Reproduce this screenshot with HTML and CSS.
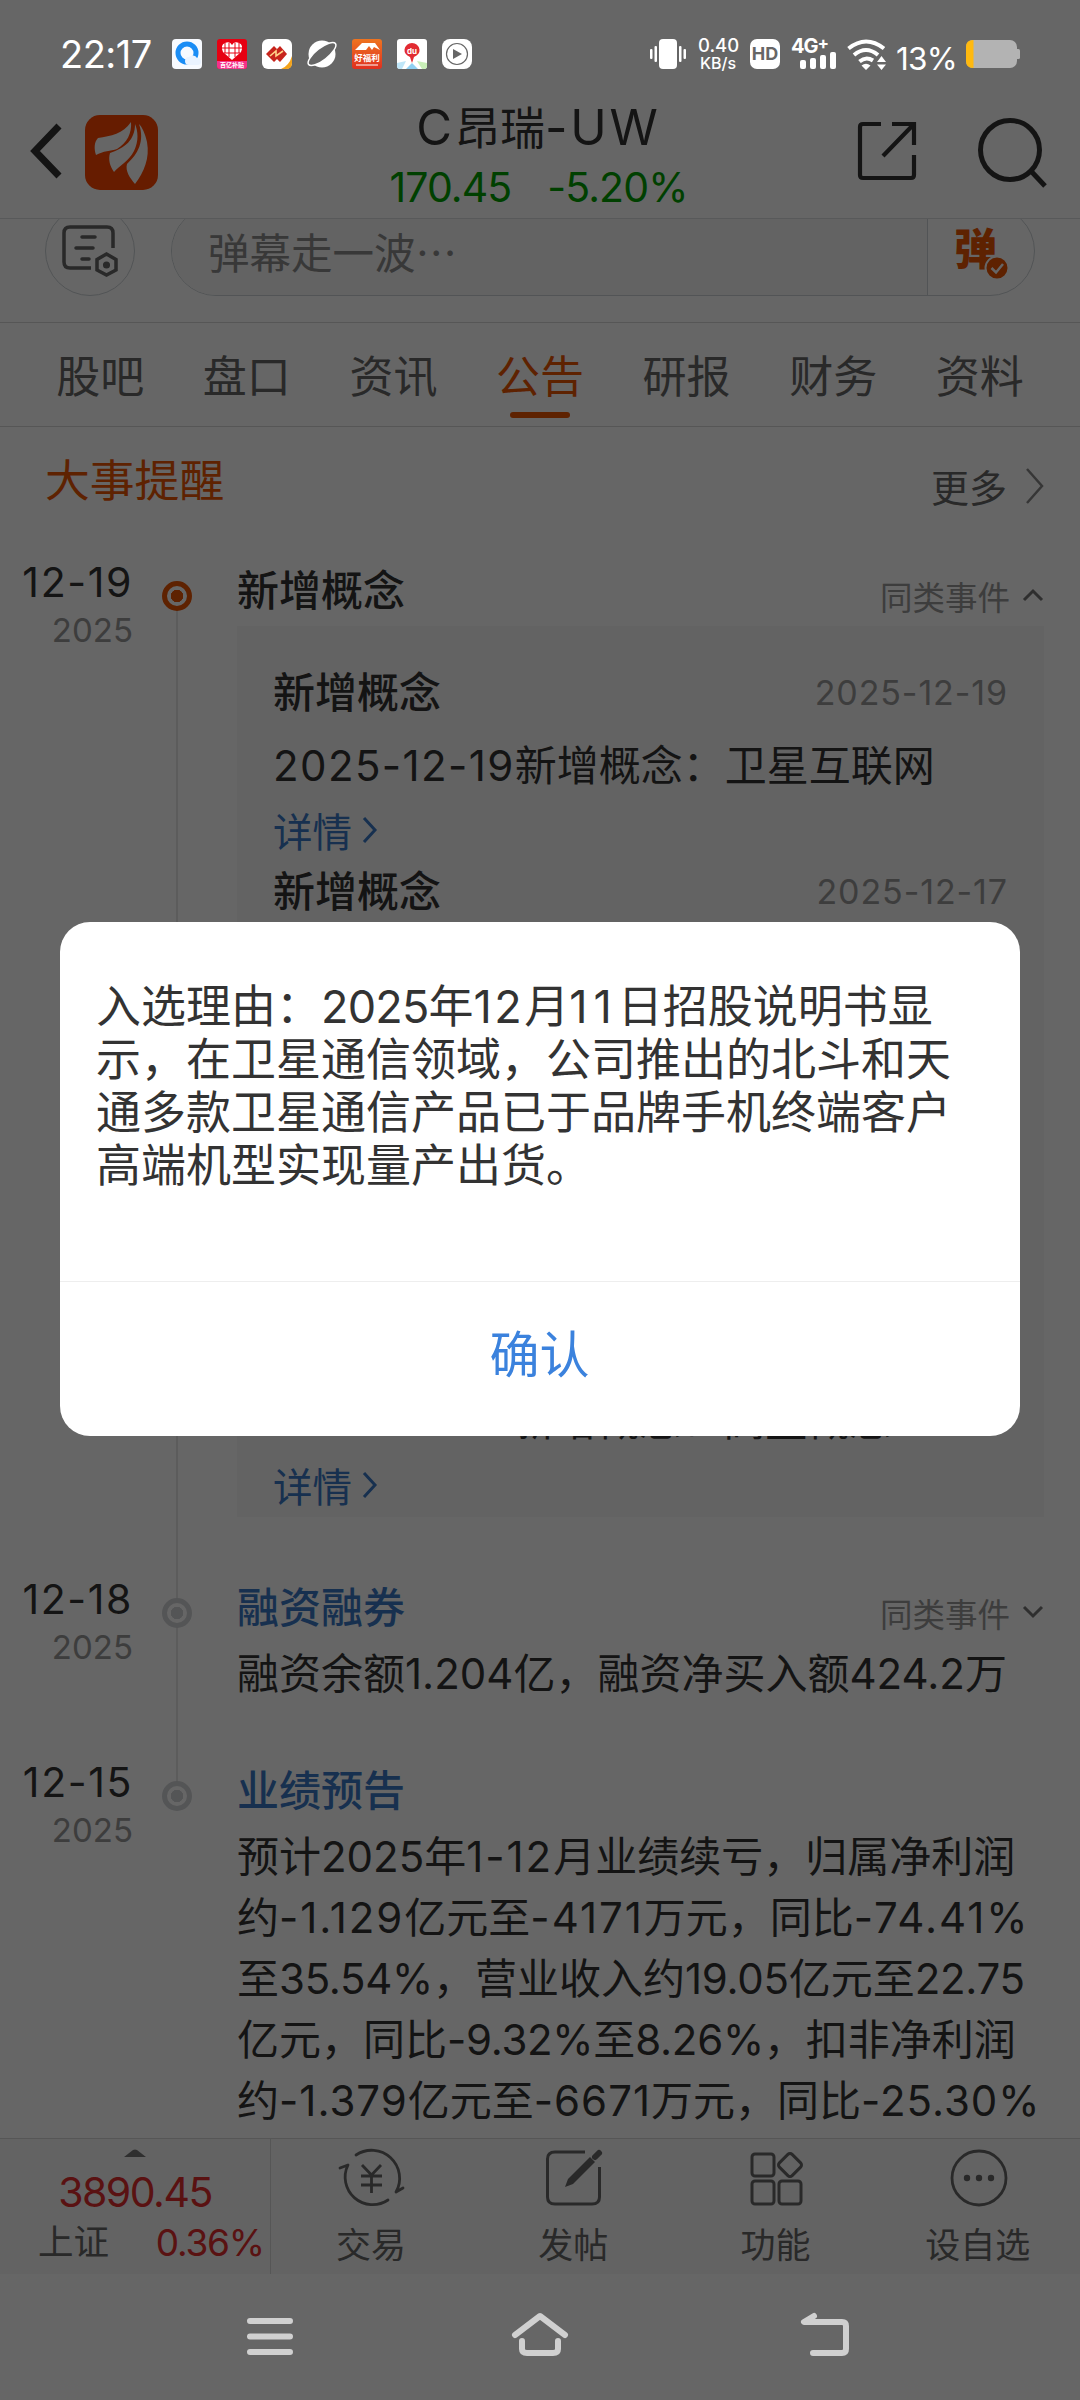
FILE: index.html
```html
<!DOCTYPE html>
<html lang="zh-CN">
<head>
    <meta charset="UTF-8">
    <meta name="viewport" content="width=device-width, initial-scale=1.0">
    <title>C昂瑞-UW 公告</title>
    <link rel="stylesheet" href="styles.css">
</head>
<body>
    <div class="phone">
        <header class="header">
            <div class="header-left">
                <svg class="back" width="34" height="60" viewBox="0 0 34 60"><path d="M29 5L5 30L29 55" fill="none" stroke="#333" stroke-width="7"/></svg>
                <svg class="logo" width="73" height="75" viewBox="0 0 73 75">
                    <rect width="73" height="75" rx="15" fill="#ff4600"/>
                    <path d="M46 7C38 19 26 21 13 23C9 27 9 34 11 40C18 36 26 36 32 34C42 28 47 18 46 7Z" fill="#fff"/>
                    <path d="M50 9C50 25 40 33 25 38C23 45 25 51 29 57C35 50 44 46 49 36C54 26 53 16 50 9Z" fill="#fff"/>
                    <path d="M54 9C60 26 53 39 42 49C40 56 45 63 50 69C59 57 65 43 62 27C60 18 57 12 54 9Z" fill="#fff"/>
                </svg>
            </div>
            <div class="stock">
                <div class="stock-name"><span>C</span>昂瑞<span>-UW</span></div>
                <div class="stock-price"><span>170.45</span><span>-5.20%</span></div>
            </div>
            <div class="header-right">
                <svg width="60" height="62" viewBox="0 0 60 62" fill="none" stroke="#333" stroke-width="4.2">
                    <path d="M24 4H6Q3 4 3 7V55Q3 58 6 58H54Q57 58 57 55V35M35 4H57V25M57 4L26 36"/>
                </svg>
                <svg class="search" width="70" height="72" viewBox="0 0 70 72" fill="none" stroke="#333" stroke-width="5">
                    <circle cx="33" cy="34" r="29.5"/><path d="M53 54L68 70"/>
                </svg>
            </div>
        </header>

        <div class="danmu">
            <div class="danmu-set">
                <svg width="56" height="52" viewBox="0 0 56 52" fill="none" stroke="#666" stroke-width="3.5" stroke-linecap="round">
                    <path d="M51 23V8Q51 2 45 2H8Q2 2 2 8V37Q2 43 8 43H29" stroke-linecap="butt"/>
                    <path d="M20 12H33M14 23H31M20 34H27"/>
                    <path d="M44.500 29L54 34.500V45L44.500 50L35 45V34.500Z"/>
                    <circle cx="44.500" cy="40" r="1.800" fill="#666"/>
                </svg>
            </div>
            <div class="danmu-box">
                <div class="danmu-input">弹幕走一波…</div>
                <div class="danmu-switch">弹
                    <svg class="danmu-check" width="24" height="24" viewBox="0 0 24 24"><circle cx="12" cy="12" r="11.500" fill="#ea5504" stroke="#fff" stroke-width="2"/><path d="M6.500 12L11 16.500L18 8" fill="none" stroke="#fff" stroke-width="2.500"/></svg>
                </div>
            </div>
        </div>

        <nav class="tabs">
            <div class="tab">股吧</div>
            <div class="tab">盘口</div>
            <div class="tab">资讯</div>
            <div class="tab active">公告</div>
            <div class="tab">研报</div>
            <div class="tab">财务</div>
            <div class="tab">资料</div>
        </nav>

        <main class="content">
            <div class="section-head">
                <h2>大事提醒</h2>
                <div class="more">更多
                    <svg width="20" height="36" viewBox="0 0 20 36"><path d="M2 1L17 18L2 35" fill="none" stroke="#888" stroke-width="2.500"/></svg>
                </div>
            </div>

            <div class="event event-open">
                <div class="date"><b>12-19</b><span>2025</span></div>
                <div class="axis"><i class="dot dot-on"></i></div>
                <div class="event-body">
                    <div class="event-head">
                        <h3>新增概念</h3>
                        <div class="same">同类事件 <svg width="22" height="14" viewBox="0 0 22 14"><path d="M2 12L11 3L20 12" fill="none" stroke="#777" stroke-width="3"/></svg></div>
                    </div>
                    <div class="panel">
                        <div class="entry">
                            <div class="entry-head"><h3>新增概念</h3><time>2025-12-19</time></div>
                            <p><span class="day">2025-12-19</span>新增概念：卫星互联网</p>
                            <a class="detail">详情<svg width="16" height="28" viewBox="0 0 16 28"><path d="M2 2L13 14L2 26" fill="none" stroke="#3a78c6" stroke-width="3"/></svg></a>
                        </div>
                        <div class="entry">
                            <div class="entry-head"><h3>新增概念</h3><time>2025-12-17</time></div>
                        </div>
                        <div class="entry entry-last">
                            <p><span class="day day-last">2025-12-09</span>新增概念：高盛概念</p>
                            <a class="detail">详情<svg width="16" height="28" viewBox="0 0 16 28"><path d="M2 2L13 14L2 26" fill="none" stroke="#3a78c6" stroke-width="3"/></svg></a>
                        </div>
                    </div>
                </div>
            </div>

            <div class="event event-margin">
                <div class="date"><b>12-18</b><span>2025</span></div>
                <div class="axis"><i class="dot"></i></div>
                <div class="event-body">
                    <div class="event-head">
                        <h3 class="blue">融资融券</h3>
                        <div class="same">同类事件 <svg width="22" height="14" viewBox="0 0 22 14"><path d="M2 2L11 11L20 2" fill="none" stroke="#777" stroke-width="3"/></svg></div>
                    </div>
                    <p>融资余额1.204亿，融资净买入额424.2万</p>
                </div>
            </div>

            <div class="event event-end">
                <div class="date"><b>12-15</b><span>2025</span></div>
                <div class="axis"><i class="dot"></i></div>
                <div class="event-body">
                    <div class="event-head"><h3 class="blue">业绩预告</h3></div>
                    <p>预计2025年<span class="wide">1-12</span>月业绩续亏，归属净利润<br>约<span class="wide">-1.129</span>亿元至<span class="wide">-4171</span>万元，同比<span class="wide">-74.41%</span><br>至<span class="tight">35.54%</span>，营业收入约<span class="tight">19.05</span>亿元至<span class="tight">22.75</span><br>亿元，同比<span class="tight">-9.32%</span>至<span class="tight">8.26%</span>，扣非净利润<br>约<span class="loose">-1.379</span>亿元至<span class="loose">-6671</span>万元，同比<span class="loose">-25.30%</span></p>
                </div>
            </div>
        </main>

        <footer class="toolbar">
            <div class="index">
                <svg width="22" height="8" viewBox="0 0 22 8"><path d="M0 8L9 1Q11 0 13 1L22 8Z" fill="#777"/></svg>
                <div class="index-value">3890.45</div>
                <div class="index-row"><span>上证</span><em>0.36%</em></div>
            </div>
            <div class="tool">
                <svg width="66" height="60" viewBox="0 0 66 60" fill="none" stroke="#666" stroke-width="2.800" stroke-linecap="round" stroke-linejoin="round">
                    <path d="M17 7A28 28 0 0 1 57 44L64 40M49 52A27.500 27.500 0 0 1 9 17L1 20"/>
                    <path d="M23 17L32.500 27L42 17M32.500 27V45M22 28H43M22 37H43" stroke-linecap="butt"/>
                </svg>
                <span>交易</span>
            </div>
            <div class="tool">
                <svg width="60" height="60" viewBox="0 0 60 60" fill="none" stroke="#666" stroke-width="3">
                    <path d="M41 4H11Q3.500 4 3.500 11V49Q3.500 56 11 56H48Q55.500 56 55.500 49V19"/>
                    <path d="M21 39L24 31L46 9L51 14L29 36Z" fill="#666" stroke="none"/><path d="M51 9L55 5" stroke-width="6" stroke-linecap="round"/>
                </svg>
                <span>发帖</span>
            </div>
            <div class="tool">
                <svg width="60" height="60" viewBox="0 0 60 60" fill="none" stroke="#666" stroke-width="3">
                    <rect x="5" y="6" width="22" height="22" rx="3"/><rect x="5" y="33" width="22" height="23" rx="3"/><rect x="32" y="33" width="22" height="23" rx="3"/>
                    <rect x="34" y="8" width="18" height="18" rx="3" transform="rotate(45 43 17)"/>
                </svg>
                <span>功能</span>
            </div>
            <div class="tool">
                <svg width="60" height="60" viewBox="0 0 60 60"><circle cx="30" cy="30" r="27" fill="none" stroke="#666" stroke-width="2.800"/><g fill="#666"><circle cx="18" cy="30" r="3.200"/><circle cx="30" cy="30" r="3.200"/><circle cx="42" cy="30" r="3.200"/></g></svg>
                <span>设自选</span>
            </div>
        </footer>
    </div>

    <div class="mask"></div>

    <div class="status-bar">
        <div class="status-left">
            <span class="clock">22:17</span>
            <svg width="30" height="30" viewBox="0 0 30 30"><rect width="30" height="30" rx="4" fill="#f7faff"/><circle cx="15" cy="14" r="9" fill="none" stroke="#1b8df5" stroke-width="5"/><path d="M17 26a4 4 0 0 1 0-8a5 5 0 0 1 8 1a3.500 3.500 0 0 1 1 7Z" fill="#eaf3ff"/></svg>
            <svg width="30" height="30" viewBox="0 0 30 30"><rect width="30" height="30" rx="3" fill="#e60012"/><path d="M0 22H30V27Q30 30 27 30H3Q0 30 0 27Z" fill="#f5308a"/><path d="M15 21L6 13Q3 6 8 4Q13 2 15 6Q17 2 22 4Q27 6 24 13Z" fill="#fff"/><path d="M8 4V14M12 4V18M18 4V18M22 4V14M5 9H25M7 14H23" stroke="#e60012" stroke-width="1"/><text x="15" y="28" font-size="6" text-anchor="middle" class="tiny">百亿补贴</text></svg>
            <svg width="30" height="30" viewBox="0 0 30 30"><rect width="30" height="30" rx="6" fill="#fff"/><path d="M4 15L12 7L15 10L18 7L25 15L18 23L15 20L12 23Z" fill="#c7241c"/><path d="M8 17L14 12V17L21 12" fill="none" stroke="#ffd28a" stroke-width="1.600"/><path d="M30 17V24Q30 30 24 30H19Q27 27 30 17Z" fill="#f3a31b"/></svg>
            <svg width="30" height="30" viewBox="0 0 30 30"><circle cx="15" cy="15" r="13.500" fill="#fff"/><ellipse cx="15" cy="15" rx="17" ry="6" transform="rotate(-38 15 15)" fill="#666" stroke="#fff" stroke-width="1.500"/></svg>
            <svg width="30" height="30" viewBox="0 0 30 30"><defs><linearGradient id="fuli" x2="0" y2="1"><stop stop-color="#ee7420"/><stop offset="1" stop-color="#df3020"/></linearGradient></defs><rect width="30" height="30" rx="3" fill="url(#fuli)"/><path d="M3 11L10 4H23L28 11L22 8L20 11L17 7L14 11H3Z" fill="#fff"/><text x="15" y="22" font-size="8.500" text-anchor="middle" class="tiny">好福利</text><path d="M4 26H26" stroke="#fff" stroke-width="1"/></svg>
            <svg width="30" height="30" viewBox="0 0 30 30"><rect width="30" height="30" rx="3" fill="#fff"/><path d="M0 24L9 22L5 30H3Q0 30 0 27Z" fill="#bfe6f8"/><path d="M20 22L30 24V27Q30 30 27 30H25Z" fill="#c9efb8"/><path d="M9 30L15 24L21 30Z" fill="#8fd0f2"/><path d="M15 24L13 18Q7 15 7.500 10.500Q9 4 15 4Q21 4 22.500 10.500Q23 15 17 18Z" fill="#e22b32"/><text x="15" y="14.500" font-size="8" text-anchor="middle" class="tiny">du</text></svg>
            <svg width="30" height="30" viewBox="0 0 30 30"><rect width="30" height="30" rx="8" fill="#fff"/><circle cx="15" cy="15" r="10.500" fill="none" stroke="#666" stroke-width="1.200"/><path d="M11 10L20 15L11 20Z" fill="#666"/></svg>
        </div>
        <div class="status-right">
            <svg width="36" height="30" viewBox="0 0 36 30" fill="#fff"><rect x="9" width="18" height="30" rx="4"/><rect y="10" width="2.500" height="10" rx="1"/><rect x="4.500" y="7" width="2.500" height="16" rx="1"/><rect x="29" y="7" width="2.500" height="16" rx="1"/><rect x="33.500" y="10" width="2.500" height="10" rx="1"/></svg>
            <div class="speed"><span>0.40</span><small>KB/s</small></div>
            <div class="hd">HD</div>
            <div class="signal">
                <b>4G<sup>+</sup></b>
                <svg width="36" height="17" viewBox="0 0 36 17" fill="#fff"><rect y="8" width="6" height="9" rx="2"/><rect x="10" y="6" width="6" height="11" rx="2"/><rect x="20" y="3" width="6" height="14" rx="2"/><rect x="30" width="6" height="17" rx="2"/></svg>
            </div>
            <svg width="40" height="31" viewBox="0 0 40 31" fill="none" stroke="#fff" stroke-width="4"><path d="M1.500 9.500Q19 -4.500 37 9.500M7 16Q19 6 31 16M12.500 22.500Q19 17 26 21.500"/><path d="M19 31L14.500 26.500Q19 23 23.500 26.500ZM30 23L34.500 17L39 23ZM30 25.500L34.500 31L39 25.500Z" fill="#fff" stroke="none"/></svg>
            <span class="percent">13%</span>
            <svg width="55" height="28" viewBox="0 0 55 28"><rect width="51" height="28" rx="7" fill="#b3b3b3"/><path d="M51 9h1.500q1.500 0 1.500 1.500v7q0 1.500-1.500 1.500h-1.500Z" fill="#b3b3b3"/><path d="M7 0H7.500V28H7Q0 28 0 21V7Q0 0 7 0Z" fill="#ffb90f"/></svg>
        </div>
    </div>

    <div class="nav-bar">
        <svg width="46" height="44" viewBox="0 0 46 44"><path d="M3 7H43M3 22.500H43M3 38H43" stroke="#d0d0d0" stroke-width="6" stroke-linecap="round"/></svg>
        <svg class="home" width="58" height="46" viewBox="0 0 58 46" fill="none" stroke="#d0d0d0" stroke-width="6" stroke-linecap="round" stroke-linejoin="round"><path d="M4 22L29 3L54 22M11 28V36Q11 40 16 40H42Q47 40 47 36V28"/></svg>
        <svg width="48" height="44" viewBox="0 0 48 44" fill="none" stroke="#d0d0d0" stroke-width="6" stroke-linecap="round" stroke-linejoin="round"><path d="M13 2L3 8H41Q45 8 45 12V35Q45 39 41 39H12"/></svg>
    </div>

    <div class="dialog">
        <div class="dialog-text">入选理由：<span class="year">2025</span>年<span class="month">12</span>月<span class="mday">11</span>日招股说明书显<br>示，在卫星通信领域，公司推出的北斗和天<br>通多款卫星通信产品已于品牌手机终端客户<br>高端机型实现量产出货。</div>
        <button class="dialog-btn">确认</button>
    </div>
</body>
</html>
```

FILE: styles.css
```css
* {
    box-sizing: border-box;
}
body {
    margin: 0;
    width: 1080px;
    height: 2400px;
    position: relative;
    overflow: hidden;
    background: #fff;
    color: #333;
    font-family: Inter, "Noto Sans CJK SC", sans-serif;
}
h2, h3, p {
    margin: 0;
}
svg {
    display: block;
    flex: none;
    overflow: visible;
}
.phone {
    height: 2400px;
    display: flex;
    flex-direction: column;
}

/* header */
.header {
    height: 219px;
    padding: 96px 33px 0 30px;
    display: flex;
    justify-content: space-between;
    border-bottom: 1px solid #dcdfe2;
    flex: none;
}
.header-left {
    width: 240px;
    display: flex;
    padding-top: 23px;
    gap: 21px;
}
.back {
    margin-top: 2px;
}
.logo {
    margin-top: -4px;
}
.stock {
    text-align: center;
}
.stock-name {
    font-size: 45px;
    line-height: 64px;
}
.stock-name span {
    font-size: 49px;
    letter-spacing: 2.800px;
}
.stock-price {
    font-size: 41px;
    line-height: 52px;
    display: flex;
    justify-content: center;
    gap: 36px;
    letter-spacing: -0.900px;
    color: #00a000;
}
.header-right {
    width: 240px;
    display: flex;
    justify-content: flex-end;
    gap: 60px;
    padding-top: 24px;
}
.search {
    margin-top: -4px;
}

/* danmu */
.danmu {
    height: 103px;
    overflow: hidden;
    display: flex;
    padding: 0 45px;
    flex: none;
}
.danmu-set {
    width: 90px;
    height: 90px;
    margin-top: -13px;
    border: 1px solid #ccd2d6;
    border-radius: 50%;
    display: flex;
    align-items: center;
    justify-content: center;
    flex: none;
}
.danmu-box {
    flex: 1;
    height: 90px;
    margin: -13px 0 0 36px;
    border: 1px solid #ccd2d6;
    border-radius: 45px;
    display: flex;
    overflow: hidden;
}
.danmu-input {
    flex: 1;
    background: #f7f7f7;
    border-right: 1px solid #ccd2d6;
    padding-left: 36px;
    font-family: "Noto Sans CJK SC", sans-serif;
    font-size: 41.500px;
    line-height: 88px;
    color: #8c8c8c;
}
.danmu-switch {
    width: 106px;
    position: relative;
    padding-left: 26px;
    font-size: 43px;
    font-weight: 900;
    line-height: 84px;
    color: #ea5504;
}
.danmu-check {
    position: absolute;
    left: 57px;
    top: 49px;
}

/* tabs */
.tabs {
    height: 105px;
    border-top: 1px solid #d6d6d6;
    border-bottom: 1px solid #d6d6d6;
    padding: 0 27px;
    display: flex;
    flex: none;
}
.tab {
    flex: 1;
    height: 96px;
    display: flex;
    flex-direction: column;
    align-items: center;
    font-size: 44px;
    line-height: 108px;
    color: #666;
}
.active {
    color: #ea5504;
}
.active::after {
    content: "";
    width: 60px;
    height: 6px;
    margin-top: -19px;
    border-radius: 3px;
    background: #ea5504;
    flex: none;
}

/* timeline */
.content {
    flex: 1;
    min-height: 0;
    overflow: hidden;
}
.section-head {
    height: 124px;
    padding: 0 35px 0 45px;
    display: flex;
    justify-content: space-between;
}
.section-head h2 {
    font-size: 44.800px;
    font-weight: 400;
    line-height: 108px;
    color: #ea5504;
}
.more {
    height: 117px;
    display: flex;
    align-items: center;
    gap: 18px;
    font-size: 38px;
    color: #666;
}
.event {
    display: flex;
    padding-right: 36px;
    position: relative;
}
.event-open {
    height: 1017px;
}
.event-margin {
    height: 183px;
}
.date {
    width: 133px;
    padding-top: 4px;
    text-align: right;
    white-space: nowrap;
    flex: none;
}
.date b {
    display: block;
    font-size: 41px;
    font-weight: 400;
    line-height: 54px;
    letter-spacing: 1.600px;
}
.date span {
    display: block;
    font-size: 33px;
    line-height: 42px;
    color: #999;
}
.axis {
    width: 88px;
    margin-right: 16px;
    display: flex;
    flex-direction: column;
    align-items: center;
    flex: none;
    background: linear-gradient(#e6e6e6, #e6e6e6) center / 2px 100% no-repeat;
}
.event-open .axis {
    background-position: 43px 45px;
}
.event-end .axis {
    background-size: 2px 46px;
    background-position: 43px 0;
}
.dot {
    width: 30px;
    height: 30px;
    margin-top: 30px;
    border-radius: 50%;
    border: 5px solid #d2d4d7;
    background: radial-gradient(#d2d4d7 6px, #fff 6.500px);
}
.dot-on {
    border-color: #ea5504;
    background: radial-gradient(#ea5504 6px, #fff 6.500px);
}
.event-body {
    flex: 1;
    font-size: 42px;
    white-space: nowrap;
}
.event-head {
    height: 75px;
    padding-top: 13px;
    display: flex;
    justify-content: space-between;
}
h3 {
    font-size: 42px;
    font-weight: 500;
    line-height: 54px;
}
.blue {
    color: #3a78c6;
}
.same {
    display: flex;
    align-items: center;
    gap: 12px;
    height: 62px;
    font-size: 32.500px;
    color: #999;
}
.event-body p {
    line-height: 61px;
}
.wide {
    letter-spacing: 1.950px;
}
.loose {
    letter-spacing: 1px;
}
.tight {
    letter-spacing: -0.300px;
}
.panel {
    height: 891px;
    background: #f7f7f7;
    padding: 40px 36px 0 36px;
    display: flex;
    flex-direction: column;
}
.entry {
    height: 199px;
}
.entry-head {
    display: flex;
    justify-content: space-between;
}
.entry time {
    font-size: 34px;
    line-height: 54px;
    letter-spacing: 0.900px;
    color: #999;
}
.entry p {
    margin-top: 15px;
}
.day {
    letter-spacing: 1.400px;
}
.entry-last {
    margin-top: auto;
    height: 127px;
}
.entry-last p {
    margin-top: 0;
}
.day-last {
    letter-spacing: 0.300px;
}
.detail {
    display: flex;
    align-items: center;
    gap: 10px;
    height: 67px;
    font-size: 39.500px;
    color: #3a78c6;
}

/* bottom toolbar */
.toolbar {
    height: 136px;
    margin-bottom: 126px;
    display: flex;
    background: #f7f7f7;
    border-top: 1px solid #d6d6d6;
    flex: none;
}
.index {
    width: 271px;
    padding-top: 10px;
    border-right: 1px solid #d6d6d6;
    display: flex;
    flex-direction: column;
    align-items: center;
}
.index-value {
    margin-top: 10px;
    font-size: 41px;
    line-height: 50px;
    letter-spacing: -1.500px;
    color: #e02e2e;
}
.index-row {
    width: 100%;
    padding: 0 6px 0 38px;
    display: flex;
    justify-content: space-between;
    font-size: 35.500px;
    line-height: 51px;
    color: #666;
}
.index-row em {
    font-size: 37px;
    font-style: normal;
    letter-spacing: -1.200px;
    color: #e02e2e;
}
.tool {
    flex: 1;
    padding-top: 9px;
    display: flex;
    flex-direction: column;
    align-items: center;
    font-size: 35px;
    line-height: 50px;
    color: #666;
}
.tool span {
    margin: 12px 2px 0 0;
}

.mask {
    position: absolute;
    inset: 0;
    background: rgba(0,0,0,0.6);
}

/* system bars */
.status-bar {
    position: absolute;
    top: 0;
    left: 0;
    width: 1080px;
    height: 108px;
    padding: 0 59px 0 60px;
    display: flex;
    align-items: center;
    justify-content: space-between;
    color: #fff;
}
.status-left, .status-right {
    display: flex;
    align-items: center;
}
.status-left {
    gap: 15px;
}
.clock {
    width: 97px;
    font-size: 38px;
    letter-spacing: -0.500px;
}
.tiny {
    fill: #fff;
    font-weight: 700;
}
.speed {
    width: 40px;
    margin-left: 12px;
    text-align: center;
    font-size: 18.500px;
    line-height: 15px;
    font-weight: 500;
}
.speed span, .speed small {
    display: block;
}
.speed small {
    margin-top: 3px;
    font-size: 16px;
}
.hd {
    width: 30px;
    height: 30px;
    margin-left: 12px;
    border-radius: 7px;
    background: #fff;
    color: #666;
    font-size: 18px;
    font-weight: 700;
    line-height: 30px;
    text-align: center;
}
.signal {
    width: 45px;
    margin: 0 11px;
    display: flex;
    flex-direction: column;
    align-items: flex-end;
}
.signal b {
    align-self: flex-start;
    height: 13px;
    font-size: 20px;
    line-height: 14px;
    letter-spacing: -1px;
}
.signal sup {
    font-size: 17px;
    line-height: 0;
    vertical-align: 4px;
}
.percent {
    width: 60px;
    margin: 9px 10px 0 9px;
    font-size: 31.500px;
    line-height: 34px;
    letter-spacing: -0.800px;
}
.nav-bar {
    position: absolute;
    left: 0;
    bottom: 0;
    width: 1080px;
    height: 126px;
    padding: 0 231px 2px 247px;
    display: flex;
    align-items: center;
    justify-content: space-between;
}
.home {
    margin-right: 14px;
}

/* dialog */
.dialog {
    position: absolute;
    left: 60px;
    top: 922px;
    width: 960px;
    height: 514px;
    border-radius: 30px;
    background: #fff;
    display: flex;
    flex-direction: column;
}
.dialog-text {
    flex: 1;
    padding: 58px 36px 0;
    font-size: 45px;
    line-height: 53px;
    white-space: nowrap;
}
.year {
    letter-spacing: -0.800px;
}
.month {
    letter-spacing: 2.500px;
}
.mday {
    letter-spacing: 6px;
}
.dialog-btn {
    height: 155px;
    padding: 0 1px 9px 0;
    border: 0;
    border-top: 1px solid #eee;
    background: none;
    font: 50px/60px Inter, "Noto Sans CJK SC", sans-serif;
    color: #3b82dd;
}
```
